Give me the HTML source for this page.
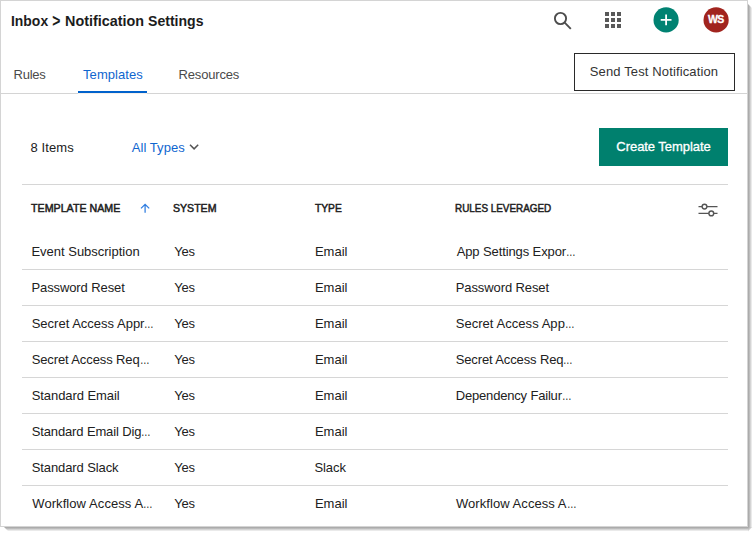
<!DOCTYPE html>
<html lang="en"><head><meta charset="utf-8"><title>Notification Settings</title>
<style>
html,body{margin:0;padding:0;background:#fff;}
body{width:756px;height:535px;position:relative;overflow:hidden;font-family:"Liberation Sans",sans-serif;color:#212121;}
.frame{position:absolute;left:0;top:0;width:746px;height:525px;background:#fff;border:1px solid #d4d4d4;}
.t{position:absolute;white-space:nowrap;line-height:1;}
.ul{position:absolute;left:78px;top:91px;width:69px;height:2px;background:#0062cc;}
.hr{position:absolute;left:1px;top:93px;width:746px;height:1px;background:#d4d4d4;}
.btn1{position:absolute;left:574px;top:53px;width:159px;height:36px;border:1px solid #2a2a2a;}
.btn2{position:absolute;left:599px;top:128px;width:129px;height:38px;background:#00806e;}
.line{position:absolute;left:22px;width:706px;height:1px;background:#d6d6d6;}
.circ{position:absolute;top:7px;width:25px;height:25px;border-radius:50%;}
svg{position:absolute;overflow:visible;}
.e{display:inline-block;transform:scaleX(.74);transform-origin:0 50%;letter-spacing:0;}
</style></head><body>
<div class="frame"></div>
<svg style="left:0;top:0" width="756" height="535" viewBox="0 0 756 535"><defs>
<linearGradient id="gr" x1="0" y1="0" x2="1" y2="0"><stop offset="0" stop-color="#000" stop-opacity=".36"/><stop offset=".3" stop-color="#000" stop-opacity=".28"/><stop offset=".6" stop-color="#000" stop-opacity=".15"/><stop offset="1" stop-color="#000" stop-opacity="0"/></linearGradient>
<linearGradient id="gb" x1="0" y1="0" x2="0" y2="1"><stop offset="0" stop-color="#000" stop-opacity=".36"/><stop offset=".3" stop-color="#000" stop-opacity=".28"/><stop offset=".6" stop-color="#000" stop-opacity=".15"/><stop offset="1" stop-color="#000" stop-opacity="0"/></linearGradient><linearGradient id="gc" gradientUnits="userSpaceOnUse" x1="748" y1="527" x2="750.500" y2="529.500"><stop offset="0" stop-color="#000" stop-opacity=".36"/><stop offset=".5" stop-color="#000" stop-opacity=".24"/><stop offset="1" stop-color="#000" stop-opacity=".08"/></linearGradient></defs>
<polygon points="748,4 752.500,8.500 752.500,527 748,527" fill="url(#gr)"/>
<polygon points="4,527 8.500,531.500 748,531.500 748,527" fill="url(#gb)"/>
<polygon points="748,527 752.500,527 748,531.500" fill="url(#gc)"/>
</svg>
<div class="t" id="chev" style="left:51.85px;top:12.65px;font-size:15px;font-weight:bold;color:#1c1c1c;transform:scale(.93,1.2);transform-origin:4.500px 8px;">&gt;</div>
<svg style="left:0;top:0" width="756" height="40" viewBox="0 0 756 40">
<g fill="none" stroke="#4d4d4d" stroke-width="1.9"><circle cx="560.500" cy="18.500" r="5.600"/><path d="M564.700 22.700L570.800 28.800"/></g>
<path fill="#595959" d="M605 12h4v4h-4zM611 12h4v4h-4zM617 12h4v4h-4zM605 18h4v4h-4zM611 18h4v4h-4zM617 18h4v4h-4zM605 24h4v4h-4zM611 24h4v4h-4zM617 24h4v4h-4z"/>
<circle cx="666.100" cy="19.900" r="12.600" fill="#008272"/>
<path d="M666.100 14.500v10.800M660.700 19.900h10.800" stroke="#fff" stroke-width="1.800" fill="none"/>
<circle cx="716.100" cy="19.900" r="12.600" fill="#a1241e"/>
</svg>
<div class="ul"></div>
<div class="hr"></div>
<div style="position:absolute;left:78px;top:93px;width:69px;height:1px;background:#f5f0eb;"></div>
<div class="btn1"></div>
<svg style="left:186px;top:140px" width="16" height="14" viewBox="186 140 16 14"><path fill="none" stroke="#555" stroke-width="1.500" d="M190 144.800l4.100 4.100 4.100-4.100"/></svg>
<div class="btn2"></div>
<div class="line" style="top:184px"></div>
<svg style="left:138px;top:200px" width="14" height="16" viewBox="138 200 14 16"><path fill="none" stroke="#2f7de0" stroke-width="1.250" d="M145.100 212.800V204.500M141 208.400l4.100-4.100 4.100 4.100"/></svg>
<svg style="left:696px;top:200px" width="24" height="20" viewBox="696 200 24 20"><g fill="#fff" stroke="#555" stroke-width="1.400"><path d="M698.500 206.600h19M698.500 213.400h19"/><circle cx="704.500" cy="206.600" r="2.400"/><circle cx="711.300" cy="213.400" r="2.400"/></g></svg>
<div class="t" id="t_inbox" style="left:10.53px;top:13.20px;font-size:15px;color:#1c1c1c;font-weight:bold;transform:scaleX(0.9280);transform-origin:0 0;">Inbox</div>
<div class="t" id="t_notif" style="left:64.74px;top:13.20px;font-size:15px;color:#1c1c1c;font-weight:bold;transform:scaleX(0.9582);transform-origin:0 0;">Notification</div>
<div class="t" id="t_sett" style="left:147.67px;top:13.20px;font-size:15px;color:#1c1c1c;font-weight:bold;transform:scaleX(0.9382);transform-origin:0 0;">Settings</div>
<div class="t" id="ws" style="left:707.90px;top:14.01px;font-size:10.5px;color:#fff;font-weight:bold;-webkit-text-stroke:.3px;letter-spacing:-0.604px;">WS</div>
<div class="t" id="rules" style="left:13.53px;top:68.00px;font-size:13px;color:#4a4a4a;letter-spacing:-0.224px;">Rules</div>
<div class="t" id="templates" style="left:83.06px;top:68.00px;font-size:13px;color:#0f66cf;letter-spacing:0.060px;">Templates</div>
<div class="t" id="resources" style="left:178.53px;top:68.00px;font-size:13px;color:#4a4a4a;letter-spacing:-0.169px;">Resources</div>
<div class="t" id="send" style="left:589.80px;top:65.00px;font-size:13px;color:#333;letter-spacing:0.133px;">Send Test Notification</div>
<div class="t" id="items" style="left:30.41px;top:141.00px;font-size:13px;color:#212121;letter-spacing:0.107px;">8 Items</div>
<div class="t" id="alltypes" style="left:131.69px;top:141.00px;font-size:13px;color:#0f66cf;letter-spacing:0.068px;">All Types</div>
<div class="t" id="create" style="left:616.34px;top:140.20px;font-size:13px;color:#fff;-webkit-text-stroke:.3px;letter-spacing:-0.050px;">Create Template</div>
<div class="t" id="h1" style="left:31.47px;top:202.69px;font-size:11px;color:#212121;-webkit-text-stroke:.5px;transform:scaleX(0.9698);transform-origin:0 0;">TEMPLATE NAME</div>
<div class="t" id="h2" style="left:172.76px;top:202.69px;font-size:11px;color:#212121;-webkit-text-stroke:.5px;transform:scaleX(0.9607);transform-origin:0 0;">SYSTEM</div>
<div class="t" id="h3" style="left:314.83px;top:202.69px;font-size:11px;color:#212121;-webkit-text-stroke:.5px;transform:scaleX(0.9332);transform-origin:0 0;">TYPE</div>
<div class="t" id="h4" style="left:454.96px;top:202.69px;font-size:11px;color:#212121;-webkit-text-stroke:.5px;transform:scaleX(0.8997);transform-origin:0 0;">RULES LEVERAGED</div>
<div class="t" id="r0c0" style="left:31.44px;top:245.00px;font-size:13px;color:#212121;letter-spacing:-0.012px;">Event Subscription</div>
<div class="t" id="r0c1" style="left:174.36px;top:245.00px;font-size:13px;color:#212121;letter-spacing:-0.267px;">Yes</div>
<div class="t" id="r0c2" style="left:314.94px;top:245.00px;font-size:13px;color:#212121;letter-spacing:0.005px;">Email</div>
<div class="t" id="r0c3" style="left:456.67px;top:245.00px;font-size:13px;color:#212121;letter-spacing:-0.108px;">App Settings Expor<span class="e">…</span></div>
<div class="t" id="r1c0" style="left:31.44px;top:281.00px;font-size:13px;color:#212121;letter-spacing:-0.099px;">Password Reset</div>
<div class="t" id="r1c1" style="left:174.36px;top:281.00px;font-size:13px;color:#212121;letter-spacing:-0.267px;">Yes</div>
<div class="t" id="r1c2" style="left:314.94px;top:281.00px;font-size:13px;color:#212121;letter-spacing:0.005px;">Email</div>
<div class="t" id="r1c3" style="left:455.71px;top:281.00px;font-size:13px;color:#212121;letter-spacing:-0.095px;">Password Reset</div>
<div class="t" id="r2c0" style="left:31.66px;top:317.00px;font-size:13px;color:#212121;letter-spacing:0.004px;">Secret Access Appr<span class="e">…</span></div>
<div class="t" id="r2c1" style="left:174.36px;top:317.00px;font-size:13px;color:#212121;letter-spacing:-0.267px;">Yes</div>
<div class="t" id="r2c2" style="left:314.94px;top:317.00px;font-size:13px;color:#212121;letter-spacing:0.005px;">Email</div>
<div class="t" id="r2c3" style="left:455.66px;top:317.00px;font-size:13px;color:#212121;letter-spacing:0.051px;">Secret Access App<span class="e">…</span></div>
<div class="t" id="r3c0" style="left:31.66px;top:353.00px;font-size:13px;color:#212121;letter-spacing:-0.116px;">Secret Access Req<span class="e">…</span></div>
<div class="t" id="r3c1" style="left:174.36px;top:353.00px;font-size:13px;color:#212121;letter-spacing:-0.267px;">Yes</div>
<div class="t" id="r3c2" style="left:314.94px;top:353.00px;font-size:13px;color:#212121;letter-spacing:0.005px;">Email</div>
<div class="t" id="r3c3" style="left:455.66px;top:353.00px;font-size:13px;color:#212121;letter-spacing:-0.124px;">Secret Access Req<span class="e">…</span></div>
<div class="t" id="r4c0" style="left:31.66px;top:389.00px;font-size:13px;color:#212121;letter-spacing:-0.060px;">Standard Email</div>
<div class="t" id="r4c1" style="left:174.36px;top:389.00px;font-size:13px;color:#212121;letter-spacing:-0.267px;">Yes</div>
<div class="t" id="r4c2" style="left:314.94px;top:389.00px;font-size:13px;color:#212121;letter-spacing:0.005px;">Email</div>
<div class="t" id="r4c3" style="left:455.71px;top:389.00px;font-size:13px;color:#212121;letter-spacing:-0.176px;">Dependency Failur<span class="e">…</span></div>
<div class="t" id="r5c0" style="left:31.66px;top:425.00px;font-size:13px;color:#212121;letter-spacing:-0.128px;">Standard Email Dig<span class="e">…</span></div>
<div class="t" id="r5c1" style="left:174.36px;top:425.00px;font-size:13px;color:#212121;letter-spacing:-0.267px;">Yes</div>
<div class="t" id="r5c2" style="left:314.94px;top:425.00px;font-size:13px;color:#212121;letter-spacing:0.005px;">Email</div>
<div class="t" id="r6c0" style="left:31.66px;top:461.00px;font-size:13px;color:#212121;letter-spacing:-0.096px;">Standard Slack</div>
<div class="t" id="r6c1" style="left:174.36px;top:461.00px;font-size:13px;color:#212121;letter-spacing:-0.267px;">Yes</div>
<div class="t" id="r6c2" style="left:314.44px;top:461.00px;font-size:13px;color:#212121;letter-spacing:-0.075px;">Slack</div>
<div class="t" id="r7c0" style="left:32.27px;top:497.00px;font-size:13px;color:#212121;letter-spacing:0.076px;">Workflow Access A<span class="e">…</span></div>
<div class="t" id="r7c1" style="left:174.36px;top:497.00px;font-size:13px;color:#212121;letter-spacing:-0.267px;">Yes</div>
<div class="t" id="r7c2" style="left:314.94px;top:497.00px;font-size:13px;color:#212121;letter-spacing:0.005px;">Email</div>
<div class="t" id="r7c3" style="left:455.91px;top:497.00px;font-size:13px;color:#212121;letter-spacing:0.064px;">Workflow Access A<span class="e">…</span></div>
<div class="line" style="top:269px"></div>
<div class="line" style="top:305px"></div>
<div class="line" style="top:341px"></div>
<div class="line" style="top:377px"></div>
<div class="line" style="top:413px"></div>
<div class="line" style="top:449px"></div>
<div class="line" style="top:485px"></div>
</body></html>
